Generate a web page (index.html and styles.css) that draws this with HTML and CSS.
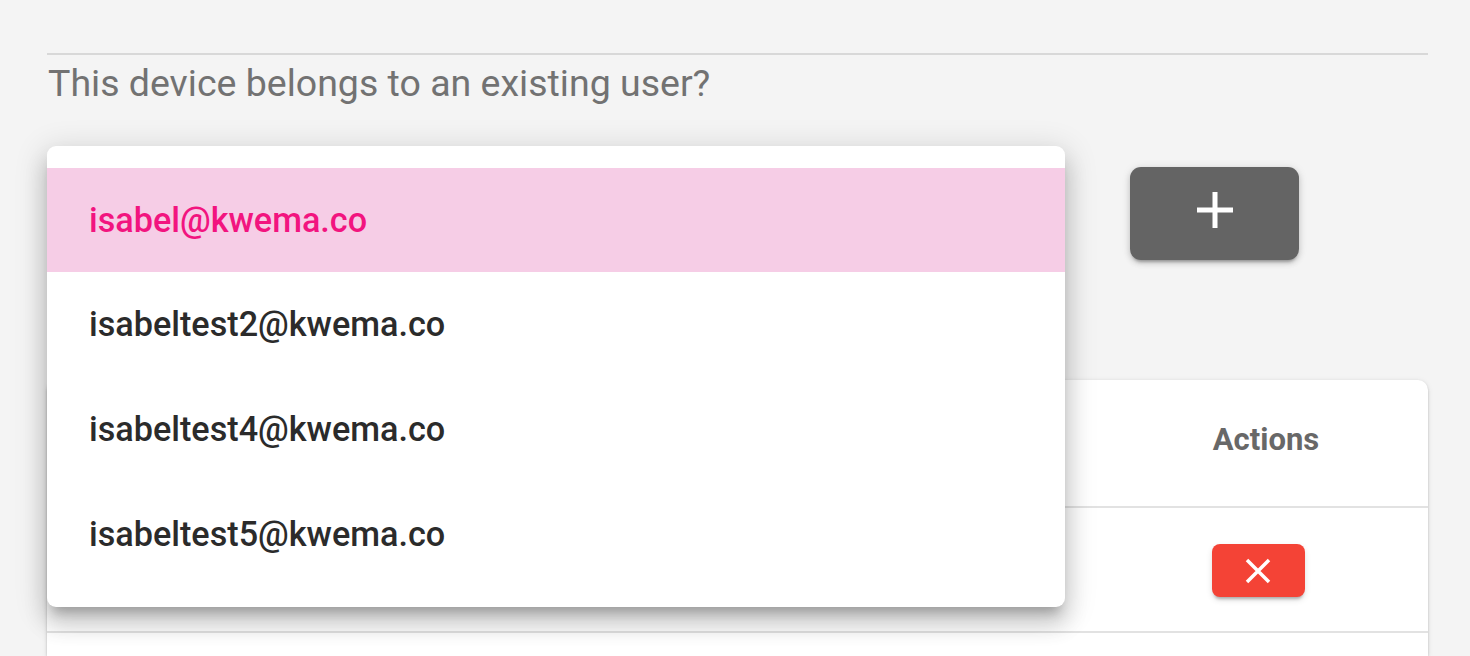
FILE: index.html
```html
<!DOCTYPE html>
<html lang="en">
<head>
<meta charset="utf-8">
<title>Device owner</title>
<link rel="stylesheet" href="styles.css">
</head>
<body>
<div class="page">
  <div class="divider"></div>
  <p class="label">This device belongs to an existing user?</p>

  <div class="field-row">
    <div class="select-field"></div>
    <button class="add-btn" type="button" aria-label="Add user">
      <svg viewBox="0 0 38 38" width="38" height="38"><path d="M19 1v36M1 19h36" stroke="#fff" stroke-width="5" fill="none"/></svg>
    </button>
  </div>

  <div class="table-card">
    <div class="t-row t-head">
      <div class="t-cell"></div>
      <div class="t-cell t-actions">Actions</div>
    </div>
    <div class="t-row t-body">
      <div class="t-cell"></div>
      <div class="t-cell t-actions">
        <button class="del-btn" type="button" aria-label="Remove">
          <svg viewBox="0 0 26 26" width="26" height="26"><path d="M2 2l22 22M24 2L2 24" stroke="#fff" stroke-width="3.5" fill="none"/></svg>
        </button>
      </div>
    </div>
    <div class="t-row t-body t-last"></div>
  </div>

  <ul class="menu">
    <li class="menu-item active">isabel@kwema.co</li>
    <li class="menu-item">isabeltest2@kwema.co</li>
    <li class="menu-item">isabeltest4@kwema.co</li>
    <li class="menu-item">isabeltest5@kwema.co</li>
  </ul>
</div>
</body>
</html>
```

FILE: styles.css
```css
html, body {
  margin: 0;
  padding: 0;
  background: #f4f4f4;
  height: 100%;
  overflow: hidden;
}

body {
  font-family: Roboto, "Liberation Sans", Arial, sans-serif;
}

.page {
  position: relative;
  padding: 53px 42px 0 47px;
}

.divider {
  height: 2px;
  background: #d8d8d8;
}

.label {
  margin: 6px 0 0 1px;
  font-size: 37.5px;
  line-height: 44px;
  color: #727272;
}

.field-row {
  display: flex;
  align-items: center;
  margin-top: 62px;
  height: 93px;
}

.select-field {
  width: 1020px;
  height: 93px;
}

.add-btn {
  margin-left: 63px;
  width: 169px;
  height: 93px;
  border: 0;
  border-radius: 11px;
  background: #646464;
  display: flex;
  align-items: center;
  justify-content: center;
  box-shadow: 0 4px 3px -2px rgba(0,0,0,.25), 0 3px 6px 0 rgba(0,0,0,.14), 0 1px 10px 0 rgba(0,0,0,.10);
  padding: 0 0 7px;
}

.table-card {
  margin-top: 120px;
  background: #fff;
  border-radius: 10px 10px 0 0;
  box-shadow: 0 2px 3px -1px rgba(0,0,0,.18), 0 1px 3px 0 rgba(0,0,0,.12), 0 1px 6px 0 rgba(0,0,0,.08);
  height: 276px;
  overflow: hidden;
}

.t-row {
  display: grid;
  grid-template-columns: 1fr 324px;
  border-bottom: 2px solid #e2e2e2;
}

.t-head {
  height: 126px;
}

.t-body {
  height: 123px;
}

.t-last {
  height: 22px;
  border-bottom: 0;
}

.t-cell {
  display: flex;
  align-items: center;
}

.t-actions {
  justify-content: center;
}

.t-head .t-actions {
  font-size: 31px;
  font-weight: 700;
  color: #686868;
  padding-bottom: 8px;
}

.t-body .t-actions {
  padding-right: 16px;
  padding-top: 2px;
}

.del-btn {
  width: 93px;
  height: 53px;
  border: 0;
  border-radius: 8px;
  background: #f44336;
  display: flex;
  align-items: center;
  justify-content: center;
  padding: 0;
  box-shadow: 0 4px 3px -2px rgba(0,0,0,.25), 0 3px 6px 0 rgba(0,0,0,.12);
}

.menu {
  position: absolute;
  top: 146px;
  left: 47px;
  width: 1018px;
  margin: 0;
  padding: 22px 0 20px;
  list-style: none;
  background: #fff;
  border-radius: 9px;
  box-shadow: 0 11px 11px -6px rgba(0,0,0,.22), 0 17px 22px 2px rgba(0,0,0,.14), 0 6px 30px 5px rgba(0,0,0,.12);
}

.menu-item {
  height: 105px;
  line-height: 105px;
  padding-left: 42px;
  font-size: 34.2px;
  font-weight: 500;
  color: #2b2b2b;
}

.menu-item.active {
  height: 104px;
  line-height: 104px;
  background: #f6cde6;
  color: #f2147f;
}
```
